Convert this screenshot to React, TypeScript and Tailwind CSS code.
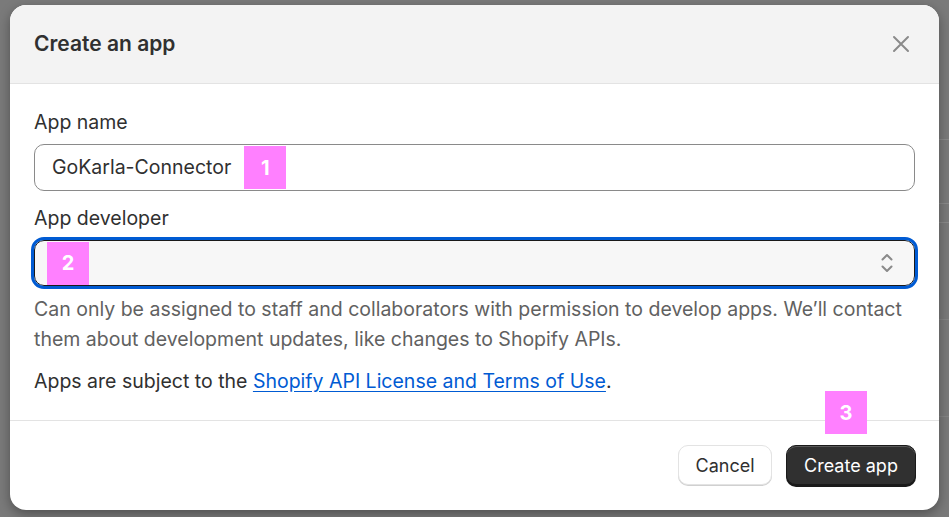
import React from 'react'

const font = { fontFamily: 'Inter, "Noto Sans", sans-serif' }

function Marker({ n, className = '' }: { n: string; className?: string }) {
  return (
    <div
      className={`flex h-[43px] w-[42px] items-center justify-center bg-[#ff80ff] text-[20px] font-bold leading-none text-white ${className}`}
    >
      {n}
    </div>
  )
}

export default function App() {
  return (
    <div className="relative h-[517px] w-[949px] overflow-hidden bg-[#7a7a7a]" style={font}>
      {/* faint page lines behind the overlay */}
      <div className="absolute right-0 top-[139px] h-px w-[12px] bg-[#8a8a8a]" />
      <div className="absolute right-0 top-[203px] h-px w-[12px] bg-[#8a8a8a]" />
      <div className="absolute right-0 top-[222px] h-px w-[12px] bg-[#8a8a8a]" />
      <div className="absolute right-0 top-[319px] h-px w-[12px] bg-[#858585]" />
      <div className="absolute right-0 top-[416px] h-px w-[12px] bg-[#858585]" />

      <div className="pl-[10px] pt-[5px]">
        <div className="relative flex h-[505px] w-[929px] flex-col overflow-hidden rounded-[16px] bg-white shadow-[0_4px_12px_rgba(0,0,0,0.35)]">
          <div className="flex h-[79px] items-center justify-between border-b border-[#e3e3e3] bg-[#f3f3f3] pl-[24px] pr-[28px]">
            <h2 className="text-[21px] font-semibold text-[#303030]">Create an app</h2>
            <svg width="20" height="20" viewBox="0 0 20 20" fill="none" className="text-[#8a8a8a]">
              <path d="M3 3l14 14M17 3L3 17" stroke="currentColor" strokeWidth="2" strokeLinecap="round" />
            </svg>
          </div>

          <div className="flex flex-col border-b border-[#e3e3e3] px-[24px] pb-[24px] pt-[24px] text-[19.5px] text-[#303030]">
            <label className="leading-[28px]">App name</label>
            <div className="mt-[8px] flex h-[47px] items-center rounded-[10px] border border-[#8a8a8a] pl-[17px]">
              <span>GoKarla-Connector</span>
              <Marker n="1" className="ml-[13px]" />
            </div>

            <label className="mt-[13px] leading-[28px]">App developer</label>
            <div className="mt-[8px] flex h-[46px] items-center justify-between rounded-[10px] border border-[#1a1a1a] bg-[#f7f7f7] pl-[12px] pr-[20px] outline-[3px] outline-offset-0 outline-[#005bd3] outline-solid">
              <Marker n="2" />
              <svg width="14" height="22" viewBox="0 0 14 22" fill="none" className="text-[#8a8a8a]">
                <path d="M2.5 7.5L7 3l4.5 4.5M2.5 14.5L7 19l4.5-4.5" stroke="currentColor" strokeWidth="2" strokeLinecap="round" strokeLinejoin="round" />
              </svg>
            </div>

            <p className="mt-[8px] leading-[30px] text-[#616161]">
              Can only be assigned to staff and collaborators with permission to develop apps. We’ll contact them about development updates, like changes to Shopify APIs.
            </p>
            <p className="mt-[12px] leading-[30px]">
              Apps are subject to the{' '}
              <a className="text-[#005bd3] underline underline-offset-[3px]">Shopify API License and Terms of Use</a>.
            </p>
          </div>

          <div className="flex flex-1 items-start justify-end gap-[14px] pr-[23px] pt-[24px]">
            <button className="h-[40px] w-[94px] rounded-[10px] border border-[#e3e3e3] bg-white text-[18px] text-[#303030] shadow-[0_1px_0_#d0d0d0]">
              Cancel
            </button>
            <button className="h-[40px] w-[130px] rounded-[10px] border border-[#1a1a1a] bg-[#303030] text-[18px] text-white shadow-[0_2px_0_#1a1a1a,inset_0_1px_0_rgba(255,255,255,0.2)]">
              Create app
            </button>
          </div>

          <Marker n="3" className="absolute left-[815px] top-[386px]" />
        </div>
      </div>
    </div>
  )
}
